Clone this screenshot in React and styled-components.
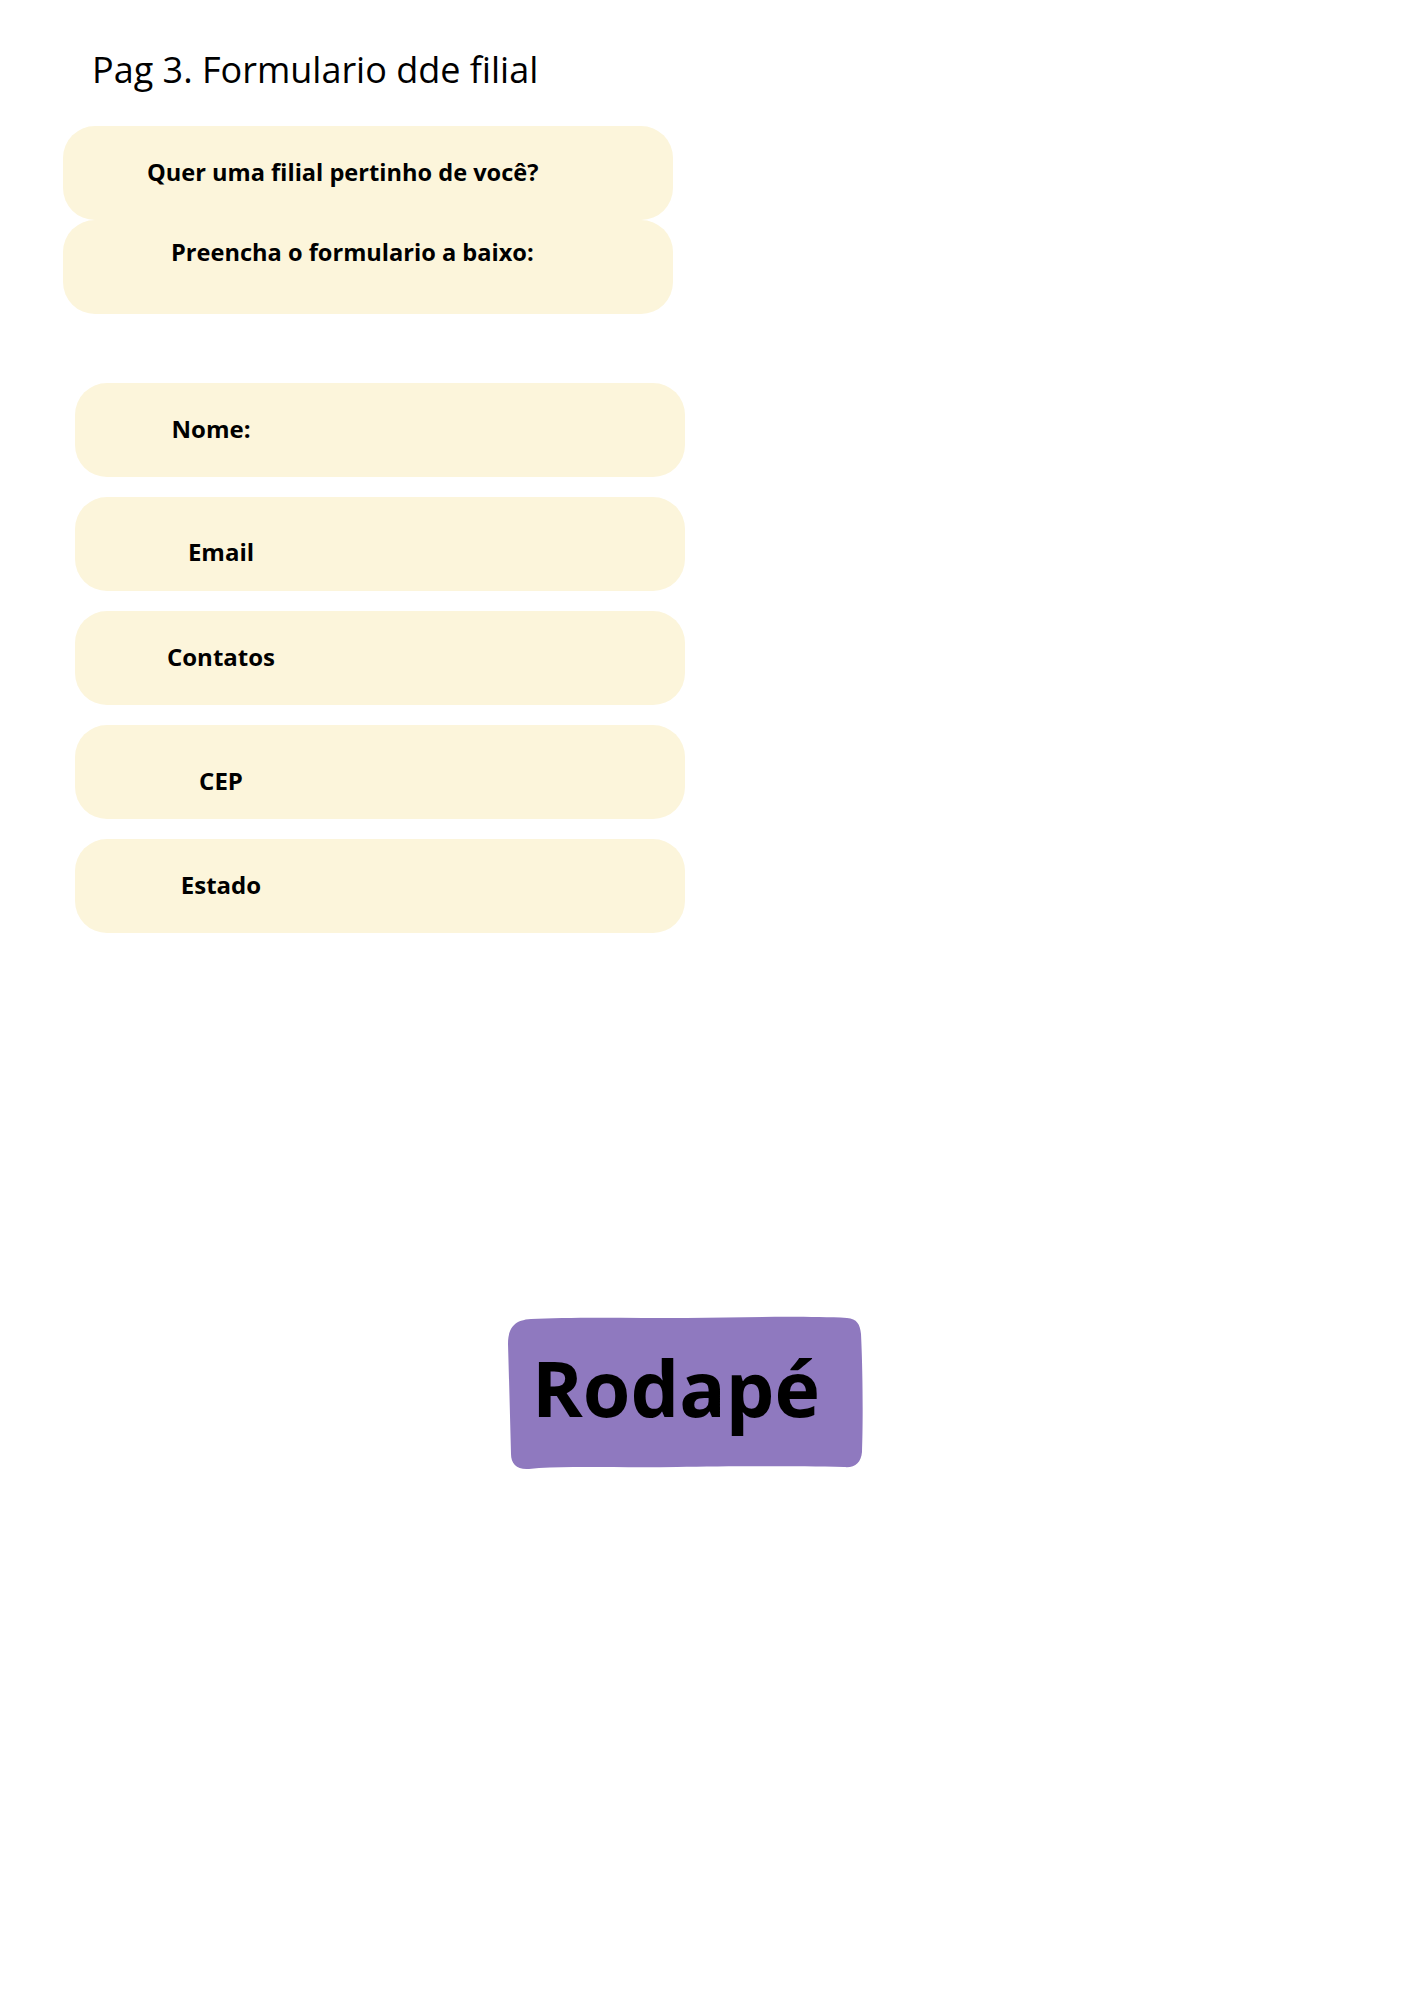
import React from "react";
import styled, { createGlobalStyle } from "styled-components";

const GlobalStyle = createGlobalStyle`
  html, body {
    margin: 0;
    padding: 0;
    background: #ffffff;
  }
  body {
    font-family: "Open Sans", "Noto Sans", "Liberation Sans", sans-serif;
    color: #000000;
  }
`;

const Page = styled.main`
  width: 1414px;
  min-height: 2000px;
  padding-top: 45px;
  box-sizing: border-box;
  display: flex;
  flex-direction: column;
  align-items: flex-start;
`;

const Title = styled.h1`
  margin: 0 0 0 92px;
  font-size: 36px;
  font-weight: 400;
  line-height: 49px;
  color: #000;
`;

const IntroStack = styled.section`
  margin: 32px 0 0 63px;
  display: flex;
  flex-direction: column;
`;

const IntroCard = styled.div`
  width: 610px;
  height: 94px;
  box-sizing: border-box;
  border-radius: 32px;
  background: #fcf5db;
  display: flex;
  align-items: ${(p) => (p.$top ? "flex-start" : "center")};
  padding-left: ${(p) => p.$indent}px;
  padding-top: ${(p) => p.$padTop || 0}px;
  padding-bottom: ${(p) => (p.$top ? 0 : 3)}px;
`;

const IntroText = styled.p`
  margin: 0;
  font-size: 23.6px;
  font-weight: 700;
  line-height: 32px;
`;

const FormList = styled.form`
  margin: 69px 0 0 75px;
  display: flex;
  flex-direction: column;
  gap: 20px;
`;

const Field = styled.div`
  width: 610px;
  height: 94px;
  box-sizing: border-box;
  border-radius: 32px;
  background: #fcf5db;
  display: flex;
  align-items: center;
  padding-top: ${(p) => (p.$drop || 0) * 2}px;
  padding-bottom: 4px;
`;

const Label = styled.label`
  width: 200px;
  margin-left: ${(p) => 46 + (p.$shift || 0)}px;
  text-align: center;
  font-size: 24px;
  font-weight: 700;
  line-height: 33px;
`;

const Footer = styled.footer`
  position: relative;
  margin: 383px 0 0 507px;
  width: 356px;
  height: 154px;
  box-sizing: border-box;
  padding: 19px 0 0 25px;
`;

const Blob = styled.svg`
  position: absolute;
  inset: 0;
  width: 100%;
  height: 100%;
  z-index: 0;
`;

const FooterText = styled.span`
  position: relative;
  z-index: 1;
  display: block;
  font-size: 77px;
  font-weight: 700;
  line-height: 105px;
  color: #000;
`;

const fields = [
  { label: "Nome:", shift: -10 },
  { label: "Email", drop: 9 },
  { label: "Contatos" },
  { label: "CEP", drop: 10 },
  { label: "Estado" },
];

export default function App() {
  return (
    <>
      <GlobalStyle />
      <Page>
        <Title>Pag 3. Formulario dde filial</Title>
        <IntroStack>
          <IntroCard $indent={84}>
            <IntroText>Quer uma filial pertinho de você?</IntroText>
          </IntroCard>
          <IntroCard $indent={108} $top $padTop={16}>
            <IntroText>Preencha o formulario a baixo:</IntroText>
          </IntroCard>
        </IntroStack>
        <FormList onSubmit={(e) => e.preventDefault()}>
          {fields.map((f) => (
            <Field key={f.label} $drop={f.drop}>
              <Label $shift={f.shift}>{f.label}</Label>
            </Field>
          ))}
        </FormList>
        <Footer>
          <Blob viewBox="0 0 356 154" preserveAspectRatio="none" aria-hidden="true">
            <path
              fill="#8f79bf"
              d="M24 3 C60 1 120 2 180 2 C240 1 300 0 340 2 C350 3 353 8 354 18 C356 60 356 110 355 136 C354 147 348 152 337 151 C290 150 220 150 170 151 C120 152 70 150 32 152 L22 153 C10 154 4 148 4 138 C3 100 2 60 1 28 C1 10 9 4 24 3 Z"
            />
          </Blob>
          <FooterText>Rodapé</FooterText>
        </Footer>
      </Page>
    </>
  );
}
